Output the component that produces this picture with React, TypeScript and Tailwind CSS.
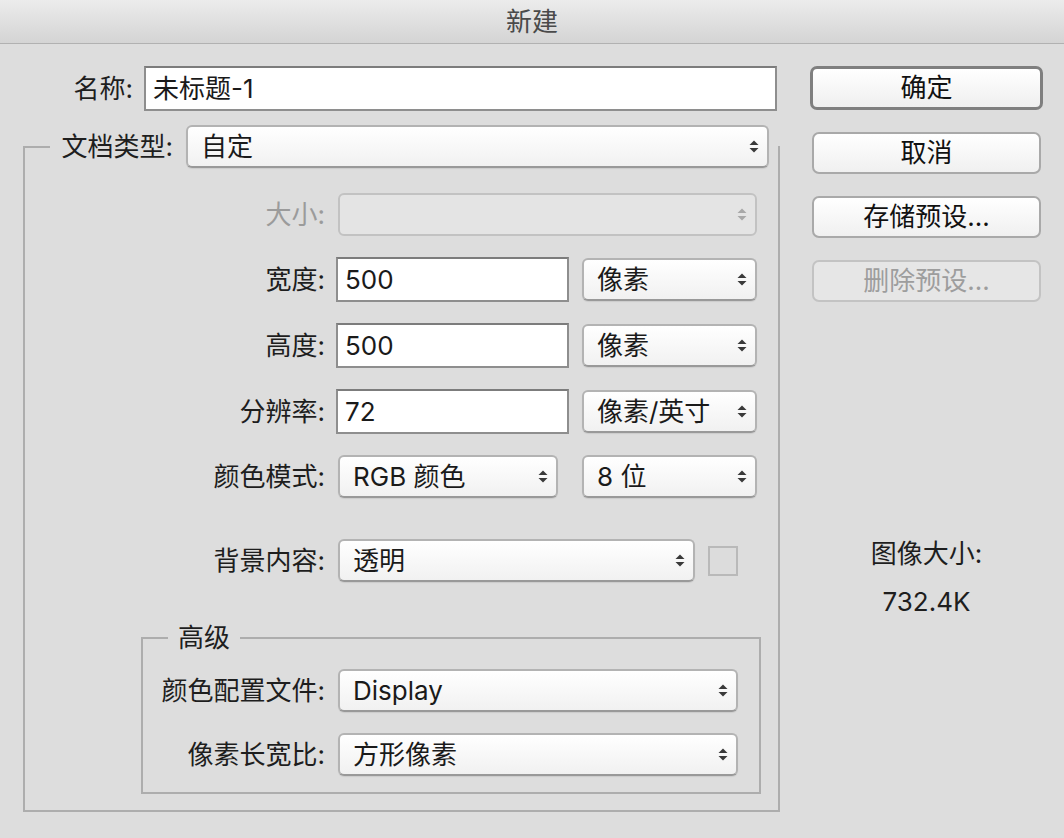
import React from 'react';

const FONT = { fontFamily: 'Inter, "Noto Sans CJK SC", sans-serif' };

const Arrows = ({ disabled }: { disabled?: boolean }) => (
  <svg width="10" height="13" viewBox="0 0 10 13" className="shrink-0">
    <path d="M0.5 5L5 0.5L9.5 5Z" fill={disabled ? '#a8a8a8' : '#3a3a3a'} />
    <path d="M0.5 8L5 12.5L9.5 8Z" fill={disabled ? '#a8a8a8' : '#3a3a3a'} />
  </svg>
);

const Select = ({ value, className, disabled }: { value?: string; className: string; disabled?: boolean }) => (
  <div
    className={`flex h-[43px] items-center justify-between rounded-[6px] border-2 pl-[13px] pr-[8px] ${
      disabled
        ? 'border-[#c2c2c2] bg-[#e4e4e4]'
        : 'border-[#b3b3b3] border-b-[#999] bg-gradient-to-b from-white to-[#f1f1f1] shadow-[0_1px_1px_rgba(0,0,0,0.08)]'
    } ${className}`}
  >
    <span className="whitespace-nowrap text-[#1a1a1a]">{value}</span>
    <Arrows disabled={disabled} />
  </div>
);

const Input = ({ value, className }: { value: string; className: string }) => (
  <div className={`flex h-[45px] items-center border-2 border-[#8e8e8e] border-t-[#7c7c7c] bg-white pl-[7px] text-[#1a1a1a] ${className}`}>
    {value}
  </div>
);

const Row = ({ label, labelW, mt, children, muted }: { label: string; labelW: string; mt: string; children: React.ReactNode; muted?: boolean }) => (
  <div className={`flex h-[45px] items-center ${mt}`}>
    <div className={`${labelW} text-right whitespace-nowrap ${muted ? 'text-[#9b9b9b]' : 'text-[#1e1e1e]'}`}>{label}</div>
    {children}
  </div>
);

const Button = ({ label, primary, disabled, className }: { label: string; primary?: boolean; disabled?: boolean; className: string }) => (
  <div
    className={`flex items-center justify-center rounded-[7px] ${
      primary
        ? 'h-[44px] border-[3px] border-[#7f7f7f] bg-gradient-to-b from-white to-[#efefef] text-[#111]'
        : disabled
        ? 'mx-[2px] h-[42px] border-2 border-[#c3c3c3] bg-[#e6e6e6] text-[#9d9d9d]'
        : 'mx-[2px] h-[42px] border-2 border-[#a9a9a9] bg-gradient-to-b from-white to-[#f0f0f0] text-[#111]'
    } ${className}`}
  >
    {label}
  </div>
);

export default function App() {
  return (
    <div className="h-[838px] w-[1064px] overflow-hidden bg-[#dddddd] text-[26px] leading-none" style={FONT}>
      <div className="flex h-[44px] items-center justify-center border-b border-[#b1b1b1] bg-gradient-to-b from-[#ececec] to-[#d4d4d4] text-[#4a4a4a]">
        新建
      </div>

      <div className="flex">
        <div className="w-[780px]">
          <div className="mt-[22px] flex h-[45px] items-center">
            <div className="w-[133px] text-right text-[#1e1e1e]">名称:</div>
            <Input value="未标题-1" className="ml-[11px] w-[633px] pl-[6px]" />
          </div>

          <fieldset className="ml-[23px] mt-[14px] w-[757px] border-2 border-[#adadad] pb-[16px]">
            <legend className="ml-[25px]">
              <div className="flex w-[728px] items-center">
                <div className="w-[123px] text-right text-[#1e1e1e]">文档类型:</div>
                <Select value="自定" className="ml-[13px] w-[583px]" />
              </div>
            </legend>

            <Row label="大小:" labelW="w-[300px]" mt="mt-[24px]" muted>
              <Select className="ml-[13px] w-[419px]" disabled />
            </Row>
            <Row label="宽度:" labelW="w-[300px]" mt="mt-[20px]">
              <Input value="500" className="ml-[11px] w-[233px]" />
              <Select value="像素" className="ml-[13px] w-[175px]" />
            </Row>
            <Row label="高度:" labelW="w-[300px]" mt="mt-[21px]">
              <Input value="500" className="ml-[11px] w-[233px]" />
              <Select value="像素" className="ml-[13px] w-[175px]" />
            </Row>
            <Row label="分辨率:" labelW="w-[300px]" mt="mt-[21px]">
              <Input value="72" className="ml-[11px] w-[233px]" />
              <Select value="像素/英寸" className="ml-[13px] w-[175px]" />
            </Row>
            <Row label="颜色模式:" labelW="w-[300px]" mt="mt-[20px]">
              <Select value="RGB 颜色" className="ml-[13px] w-[220px]" />
              <Select value="8 位" className="ml-[24px] w-[175px]" />
            </Row>
            <Row label="背景内容:" labelW="w-[300px]" mt="mt-[39px]">
              <Select value="透明" className="ml-[13px] w-[357px]" />
              <div className="ml-[13px] h-[30px] w-[30px] border-2 border-[#b9b9b9] bg-[#dcdcdc]" />
            </Row>

            <fieldset className="ml-[116px] mt-[40px] w-[620px] border-2 border-[#adadad] pb-[15px]">
              <legend className="ml-[25px] px-[10px] leading-[30px] text-[#1e1e1e]">高级</legend>
              <Row label="颜色配置文件:" labelW="w-[182px]" mt="mt-[15px]">
                <Select value="Display" className="ml-[13px] w-[400px]" />
              </Row>
              <Row label="像素长宽比:" labelW="w-[182px]" mt="mt-[19px]">
                <Select value="方形像素" className="ml-[13px] w-[400px]" />
              </Row>
            </fieldset>
          </fieldset>
        </div>

        <div className="ml-[30px] flex w-[233px] flex-col pt-[22px]">
          <Button label="确定" primary className="" />
          <Button label="取消" className="mt-[22px]" />
          <Button label="存储预设..." className="mt-[22px]" />
          <Button label="删除预设..." disabled className="mt-[22px]" />
          <div className="mt-[228px] text-center leading-[48px] text-[#1e1e1e]">
            <div>图像大小:</div>
            <div>732.4K</div>
          </div>
        </div>
      </div>
    </div>
  );
}
